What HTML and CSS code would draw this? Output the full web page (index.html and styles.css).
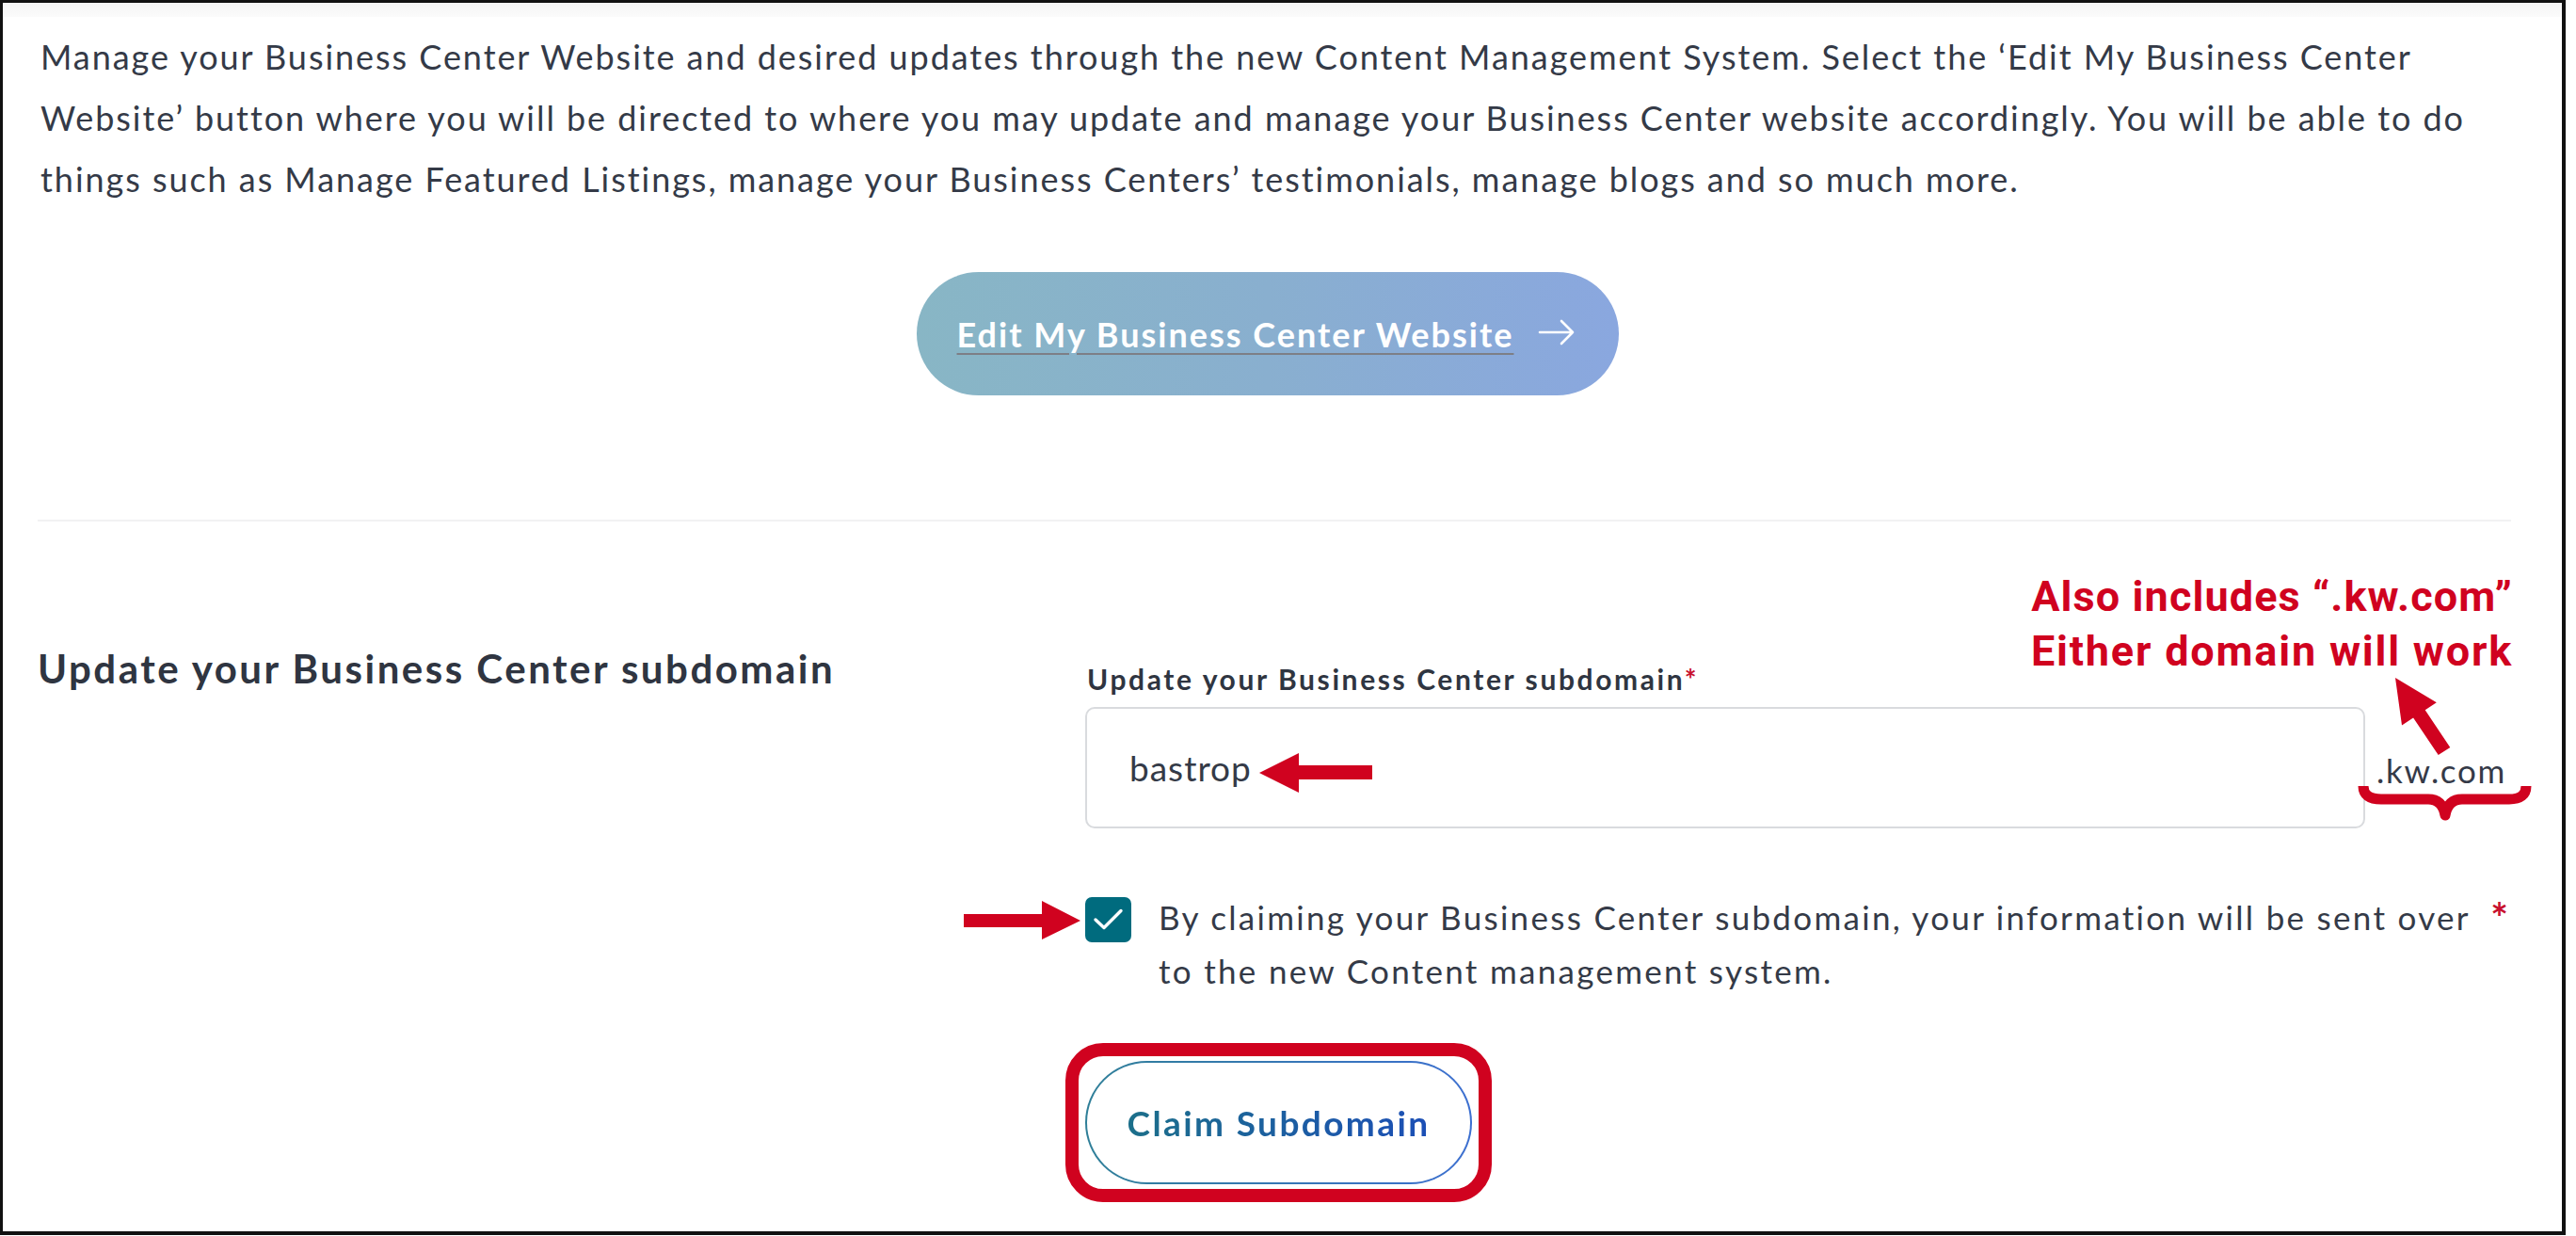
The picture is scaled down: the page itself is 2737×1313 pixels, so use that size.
FILE: index.html
```html
<!DOCTYPE html>
<html lang="en">
<head>
<meta charset="utf-8">
<title>Business Center Website</title>
<link rel="stylesheet" href="styles.css">
</head>
<body>
<div class="frame">
  <div class="topstrip"></div>
  <div class="content">
    <p class="intro">Manage your Business Center Website and desired updates through the new Content Management System. Select the ‘Edit My Business Center<br>Website’ button where you will be directed to where you may update and manage your Business Center website accordingly. You will be able to do<br>things such as Manage Featured Listings, manage your Business Centers’ testimonials, manage blogs and so much more.</p>
    <div class="cta-wrap">
      <a class="cta" href="#"><span class="cta-text">Edit My Business Center Website</span>
        <svg class="cta-arrow" viewBox="0 0 40 28" width="40" height="28"><path d="M2 14 H37 M25 2 L37 14 L25 26" fill="none" stroke="#fff" stroke-width="2.6" stroke-linecap="round" stroke-linejoin="round"/></svg>
      </a>
    </div>
    <div class="separator"></div>
    <div class="subdomain">
      <h2 class="sub-title">Update your Business Center subdomain</h2>
      <div class="sub-form">
        <label class="field-label">Update your Business Center subdomain<span class="req">*</span></label>
        <div class="input-row">
          <div class="input">bastrop</div>
          <span class="suffix">.kw.com</span>
        </div>
        <div class="check-row">
          <span class="checkbox"><svg viewBox="0 0 49 48" width="49" height="48"><path d="M11 24 L20 32.5 L38 14.5" fill="none" stroke="#fff" stroke-width="3.4" stroke-linecap="round" stroke-linejoin="round"/></svg></span>
          <span class="check-text">By claiming your Business Center subdomain, your information will be sent over<br>to the new Content management system.</span>
          <span class="req check-req">*</span>
        </div>
        <button class="claim" type="button"><span class="claim-text">Claim Subdomain</span></button>
      </div>
    </div>
  </div>
</div>

<div class="note">Also includes “.kw.com”<br><span class="note-2">Either domain will work</span></div>

<svg class="marks" viewBox="0 0 2737 1313" width="2737" height="1313">
  <g fill="#d0021f">
    <polygon points="1338,821 1380,800 1380,813 1458,813 1458,828 1380,828 1380,842"/>
    <polygon points="1148,978 1107,957 1107,971 1024,971 1024,985 1107,985 1107,998"/>
    <polygon points="2545,720 2588.8,746.3 2576.7,754.3 2603.3,793.9 2590.7,802.1 2564.1,762.5 2552,770.5"/>
  </g>
  <path d="M2511 835 Q2511 849 2530 849 L2580 849 Q2595 849 2598 866 Q2601 849 2616 849 L2666 849 Q2684 849 2684 835" fill="none" stroke="#d0021f" stroke-width="11" stroke-linejoin="round"/>
  <rect x="1139" y="1115" width="439" height="155" rx="33" ry="33" fill="none" stroke="#d0021f" stroke-width="14"/>
</svg>
</body>
</html>
```

FILE: styles.css
```css
html, body {
  margin: 0;
  padding: 0;
  background: #ffffff;
}

body {
  position: relative;
  width: 2737px;
  height: 1313px;
  overflow: hidden;
  font-family: "Lato", "Noto Sans", sans-serif;
  color: #343a47;
}

.frame {
  box-sizing: border-box;
  width: 2726px;
  height: 1312px;
  border: 3px solid #111111;
  border-right-width: 4px;
  border-bottom-width: 4px;
  background: #ffffff;
}

.topstrip {
  height: 15px;
  background: linear-gradient(#f5f5f5, #fbfbfb);
}

.content {
  padding: 0 54px 0 37px;
}

.intro {
  margin: 10px 0 0 3px;
  font-size: 36px;
  line-height: 65px;
  letter-spacing: 1.95px;
  white-space: nowrap;
}

.cta-wrap {
  display: flex;
  justify-content: center;
  margin-top: 66px;
  padding-right: 14px;
}

.cta {
  display: inline-flex;
  align-items: center;
  gap: 26px;
  box-sizing: border-box;
  height: 131px;
  padding: 0 46px 0 43px;
  border-radius: 66px;
  background: linear-gradient(90deg, #88b6c5 0%, #89afcf 50%, #8aa7df 100%);
  color: #ffffff;
  text-decoration: none;
}

.cta-text {
  font-size: 36px;
  font-weight: 700;
  letter-spacing: 2px;
  text-decoration: underline;
  text-decoration-color: #7d7f86;
  text-decoration-thickness: 2px;
  text-underline-offset: 6px;
}

.cta-arrow {
  display: block;
  margin-top: -4px;
}

.separator {
  margin-top: 132px;
  height: 2px;
  background: #f2f2f3;
}

.subdomain {
  display: grid;
  grid-template-columns: 1113px 1fr;
  align-items: start;
  padding-top: 131px;
}

.sub-title {
  margin: 0;
  font-size: 42px;
  line-height: 50px;
  font-weight: 700;
  letter-spacing: 2.5px;
  color: #2f3541;
}

.sub-form {
  display: flex;
  flex-direction: column;
  align-items: flex-start;
  padding-top: 19px;
}

.field-label {
  margin-left: 2px;
  font-size: 30px;
  line-height: 35px;
  font-weight: 700;
  letter-spacing: 2.6px;
  color: #2f3541;
}

.req {
  color: #c8102e;
}

.input-row {
  display: flex;
  align-items: center;
  gap: 12px;
  margin-top: 12px;
}

.input {
  box-sizing: border-box;
  width: 1360px;
  height: 129px;
  padding-left: 45px;
  border: 2px solid #d9dbde;
  border-radius: 10px;
  display: flex;
  align-items: center;
  font-size: 37px;
  letter-spacing: 1px;
  color: #343a47;
}

.suffix {
  font-size: 35px;
  line-height: 38px;
  letter-spacing: 1.7px;
  color: #353a48;
  padding-top: 4px;
}

.check-row {
  display: flex;
  align-items: flex-start;
  width: 1514px;
  margin-top: 66px;
}

.checkbox {
  flex: 0 0 49px;
  height: 48px;
  margin-top: 7px;
  border-radius: 7px;
  background: #006b7e;
}

.checkbox svg {
  display: block;
}

.check-text {
  flex: 1;
  margin-left: 29px;
  font-size: 35px;
  line-height: 57px;
  letter-spacing: 2.3px;
  white-space: nowrap;
}

.check-req {
  font-size: 44px;
  line-height: 57px;
  font-weight: 700;
  margin-right: 2px;
}

.claim {
  box-sizing: border-box;
  width: 411px;
  height: 131px;
  margin-top: 67px;
  border: 2px solid transparent;
  border-radius: 66px;
  background:
    linear-gradient(#ffffff, #ffffff) padding-box,
    linear-gradient(90deg, #2f7f98, #3c6fd0) border-box;
  font-family: "Lato", "Noto Sans", sans-serif;
  cursor: pointer;
}

.claim-text {
  font-size: 37px;
  font-weight: 700;
  letter-spacing: 2.4px;
  background: linear-gradient(90deg, #1c6f8a, #1c4fb6);
  -webkit-background-clip: text;
  background-clip: text;
  color: transparent;
}

.note {
  position: absolute;
  left: 2114px;
  top: 605px;
  width: 600px;
  text-align: center;
  font-family: "Roboto", "Liberation Sans", sans-serif;
  font-weight: 700;
  font-size: 45px;
  line-height: 58px;
  letter-spacing: 1.1px;
  color: #d0021f;
}

.note-2 {
  letter-spacing: 1.8px;
}

.marks {
  position: absolute;
  left: 0;
  top: 0;
  pointer-events: none;
}
```
